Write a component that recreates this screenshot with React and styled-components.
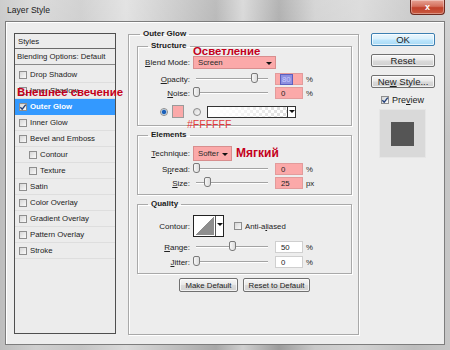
import React from "react";
import styled, { createGlobalStyle } from "styled-components";

const GlobalStyle = createGlobalStyle`
  html, body { margin: 0; padding: 0; }
  body {
    width: 450px;
    height: 350px;
    overflow: hidden;
    font-family: "Liberation Sans", Arial, sans-serif;
    color: #1c1c1c;
  }
  * { box-sizing: border-box; }
`;

const styleItems = [
  { label: "Drop Shadow" },
  { label: "Inner Shadow" },
  { label: "Outer Glow", checked: true, selected: true },
  { label: "Inner Glow" },
  { label: "Bevel and Emboss" },
  { label: "Contour", indent: true },
  { label: "Texture", indent: true },
  { label: "Satin" },
  { label: "Color Overlay" },
  { label: "Gradient Overlay" },
  { label: "Pattern Overlay" },
  { label: "Stroke" },
];

const App = () => (
  <>
    <GlobalStyle />
    <Window>
      <TitleBar>
        <Title>Layer Style</Title>
        <CloseButton>x</CloseButton>
      </TitleBar>
      <Client>
        <StylesPanel>
          <PanelHeader>Styles</PanelHeader>
          <PanelOption>Blending Options: Default</PanelOption>
          <StyleList>
            {styleItems.map((item) => (
              <StyleRow key={item.label} $selected={item.selected} $indent={item.indent}>
                <CheckBox $checked={item.checked} />
                <span>{item.label}</span>
              </StyleRow>
            ))}
          </StyleList>
        </StylesPanel>

        <GroupBox $h={306} $pad="2px 6px 0 8px">
          <Legend $ml={3}>Outer Glow</Legend>

          <GroupBox $h={85} $pad="0">
            <Legend $ml={10}>Structure</Legend>
            <Row $h={13} $mt={5}>
              <Label><u>B</u>lend Mode:</Label>
              <Select $w={83} $h={13}>
                Screen
                <Arrow />
              </Select>
            </Row>
            <SliderRow label={<><u>O</u>pacity:</>} value="80" pos={80} unit="%" hl selected />
            <SliderRow label={<><u>N</u>oise:</>} value="0" pos={0} unit="%" hl mt={2} />
            <Row $h={13} $mt={6} $pl={22}>
              <Radio $on />
              <Swatch />
              <Radio />
              <GradientPicker>
                <GradientArrow>
                  <Arrow />
                </GradientArrow>
              </GradientPicker>
            </Row>
          </GroupBox>

          <GroupBox $h={65} $pad="0" $mt={4}>
            <Legend $ml={10}>Elements</Legend>
            <Row $h={15} $mt={6}>
              <Label><u>T</u>echnique:</Label>
              <Select $w={39} $h={15}>
                Softer
                <Arrow />
              </Select>
            </Row>
            <SliderRow label={<>S<u>p</u>read:</>} value="0" pos={0} unit="%" hl mt={2} />
            <SliderRow label={<><u>S</u>ize:</>} value="25" pos={15} unit="px" hl mt={2} />
          </GroupBox>

          <GroupBox $h={75} $pad="0" $mt={4}>
            <Legend $ml={10}>Quality</Legend>
            <Row $h={22} $mt={6}>
              <Label>Contour:</Label>
              <ContourPicker>
                <ContourPreview />
                <ContourArrow>
                  <Arrow />
                </ContourArrow>
              </ContourPicker>
              <CheckBox $ml={10} />
              <SmallText>Anti-a<u>l</u>iased</SmallText>
            </Row>
            <SliderRow label={<><u>R</u>ange:</>} value="50" pos={50} unit="%" mt={4} />
            <SliderRow label={<><u>J</u>itter:</>} value="0" pos={0} unit="%" mt={3} />
          </GroupBox>

          <ButtonRow>
            <PanelButton $w={59}>Make Default</PanelButton>
            <PanelButton $w={67}>Reset to Default</PanelButton>
          </ButtonRow>
        </GroupBox>

        <SideColumn>
          <DialogButton $default>OK</DialogButton>
          <DialogButton>Reset</DialogButton>
          <DialogButton>
            <span>Ne<u>w</u> Style...</span>
          </DialogButton>
          <PreviewToggle>
            <CheckBox $checked />
            <span>Pre<u>v</u>iew</span>
          </PreviewToggle>
          <PreviewBox>
            <PreviewSquare />
          </PreviewBox>
        </SideColumn>
      </Client>

      <Note $x={17} $y={87} $size={11.4}>Внешнее свечение</Note>
      <Note $x={193} $y={46} $size={11.4}>Осветление</Note>
      <Note $x={236} $y={147} $size={12}>Мягкий</Note>
      <Note $x={187} $y={119} $size={10.5} $light>#FFFFFF</Note>
    </Window>
  </>
);

const SliderRow = ({ label, value, pos, unit, hl, selected, mt = 4 }) => (
  <Row $h={12} $mt={mt}>
    <Label>{label}</Label>
    <Slider>
      <Track>
        <Thumb style={{ left: `calc(${pos}% - 3px)` }} />
      </Track>
    </Slider>
    <NumberBox $hl={hl}>{selected ? <Selection>{value}</Selection> : value}</NumberBox>
    <Unit>{unit}</Unit>
  </Row>
);

const Window = styled.div`
  position: relative;
  width: 450px;
  height: 350px;
  padding: 0 5px 5px;
  display: flex;
  flex-direction: column;
  background:
    linear-gradient(180deg, rgba(255, 255, 255, 0.25), rgba(255, 255, 255, 0) 40%),
    linear-gradient(
      90deg,
      #bdbdbd 0%,
      #cfcfcf 8%,
      #c4c4c4 18%,
      #dadada 28%,
      #bcbcbc 40%,
      #a7a7a7 48%,
      #cfcfcf 54%,
      #9c9c9c 62%,
      #c9c9c9 70%,
      #d2d2d2 80%,
      #bdbdbd 92%,
      #c6c6c6 100%
    );
`;

const TitleBar = styled.div`
  height: 21px;
  display: flex;
  justify-content: space-between;
  align-items: flex-start;
`;

const Title = styled.div`
  padding: 5px 0 0 2px;
  font-size: 8.6px;
  line-height: 10px;
  color: #1b1b1b;
`;

const CloseButton = styled.div`
  width: 35px;
  height: 15px;
  display: flex;
  align-items: center;
  justify-content: center;
  border: 1px solid #6d2a20;
  border-top: none;
  border-radius: 0 0 4px 4px;
  background: linear-gradient(180deg, #e7a394 0%, #d4705d 45%, #c1412b 55%, #c95a40 100%);
  color: #fff;
  font-weight: bold;
  font-size: 9px;
  line-height: 1;
  box-shadow: inset 0 0 0 1px rgba(255, 255, 255, 0.35);
`;

const Client = styled.div`
  flex: 1;
  display: flex;
  align-items: flex-start;
  gap: 12px;
  padding: 7px 8px 0;
  border: 1px solid #7d7d7d;
  background: #ededed;
  box-shadow: inset 1px 1px 0 #fff;
`;

const StylesPanel = styled.div`
  flex: none;
  width: 102px;
  height: 301px;
  margin-top: 4px;
  display: flex;
  flex-direction: column;
  border: 1px solid #4f4f4f;
  background: #ececec;
  font-size: 7.8px;
`;

const PanelHeader = styled.div`
  height: 15px;
  padding-left: 3px;
  display: flex;
  align-items: center;
  border-bottom: 1px solid #6a6a6a;
`;

const PanelOption = styled(PanelHeader)`
  height: 16px;
  padding-left: 2px;
  border-bottom-color: #8a8a8a;
`;

const StyleList = styled.div`
  padding-top: 2px;
  display: flex;
  flex-direction: column;
`;

const StyleRow = styled.div`
  height: 16px;
  display: flex;
  align-items: center;
  gap: 3px;
  padding-left: ${(p) => (p.$indent ? 14 : 4)}px;
  border-bottom: 1px solid ${(p) => (p.$selected ? "#3399ff" : "#dedede")};
  background: ${(p) => (p.$selected ? "#3399ff" : "transparent")};
  color: ${(p) => (p.$selected ? "#fff" : "#222")};
  font-weight: ${(p) => (p.$selected ? "bold" : "normal")};
`;

const CheckMark = () => (
  <svg width="8" height="8" viewBox="0 0 8 8">
    <path d="M1.3 4.2 L3.2 6.2 L6.8 1.6" fill="none" stroke="#23407a" strokeWidth="1.4" />
  </svg>
);

const CheckBoxFrame = styled.span`
  flex: none;
  width: 8px;
  height: 8px;
  margin-left: ${(p) => p.$ml || 0}px;
  display: flex;
  align-items: center;
  justify-content: center;
  border: 1px solid #8e8e8e;
  background: linear-gradient(135deg, #d6d6d6, #fafafa);
  svg { flex: none; }
`;

const CheckBox = ({ $checked, $ml }) => (
  <CheckBoxFrame $ml={$ml}>{$checked && <CheckMark />}</CheckBoxFrame>
);

const GroupBox = styled.fieldset`
  flex: none;
  margin: ${(p) => p.$mt || 0}px 0 0;
  min-width: 0;
  height: ${(p) => p.$h}px;
  padding: ${(p) => p.$pad};
  border: 1px solid #a9a9a9;
  box-shadow: inset 1px 1px 0 #fff, 1px 1px 0 #fff;
  font-size: 8px;
  ${(p) => (p.$h === 306 ? "width: 231px;" : "")}
`;

const Legend = styled.legend`
  margin-left: ${(p) => p.$ml}px;
  padding: 0 3px;
  font-weight: bold;
  font-size: 8px;
  line-height: 10px;
  color: #1a1a1a;
`;

const Row = styled.div`
  height: ${(p) => p.$h}px;
  margin-top: ${(p) => p.$mt}px;
  padding-left: ${(p) => p.$pl || 0}px;
  display: flex;
  align-items: center;
`;

const Label = styled.div`
  flex: none;
  width: 52px;
  margin-right: 3px;
  text-align: right;
  font-size: 8px;
  color: #222;
  white-space: nowrap;
`;

const Select = styled.div`
  position: relative;
  width: ${(p) => p.$w}px;
  height: ${(p) => p.$h}px;
  padding-left: 4px;
  display: flex;
  align-items: center;
  border: 1px solid #d88e8e;
  background: #fba9a9;
  font-size: 7.8px;
  color: #2a2a2a;
  > span {
    position: absolute;
    right: 3px;
    top: 50%;
    margin-top: -1px;
  }
`;

const Arrow = styled.span`
  width: 0;
  height: 0;
  border-left: 3px solid transparent;
  border-right: 3px solid transparent;
  border-top: 3px solid #111;
`;

const Slider = styled.div`
  flex: none;
  width: 78px;
  padding: 0 3px;
  display: flex;
  align-items: center;
`;

const Track = styled.div`
  position: relative;
  width: 72px;
  height: 2px;
  border-top: 1px solid #a3a3a3;
  border-bottom: 1px solid #fff;
`;

const Thumb = styled.div`
  position: absolute;
  top: -6px;
  width: 7px;
  height: 10px;
  border: 1px solid #7a7a7a;
  border-radius: 2px 2px 3px 3px;
  background: linear-gradient(90deg, #f7f7f7, #dcdcdc);
`;

const NumberBox = styled.div`
  flex: none;
  width: 28px;
  height: 12px;
  margin-left: 4px;
  padding-left: 5px;
  display: flex;
  align-items: center;
  border: 1px solid ${(p) => (p.$hl ? "#e29b9b" : "#cfcfcf")};
  background: ${(p) => (p.$hl ? "#fba9a9" : "#fff")};
  font-size: 7.8px;
  color: #222;
`;

const Selection = styled.span`
  padding: 0 1px;
  background: #8d8fe0;
  outline: 1px solid #5c5fc0;
  color: #c9cbff;
`;

const Unit = styled.span`
  margin-left: 3px;
  font-size: 7.8px;
`;

const Radio = styled.span`
  flex: none;
  width: 8px;
  height: 8px;
  margin-right: ${(p) => (p.$on ? 4 : 6)}px;
  border-radius: 50%;
  border: 1px solid #8a8a8a;
  background: ${(p) =>
    p.$on
      ? "radial-gradient(circle, #1b5fb8 0 1.8px, #9cc4ea 2.4px, #f3f3f3 3px)"
      : "linear-gradient(135deg, #d8d8d8, #fafafa)"};
`;

const Swatch = styled.span`
  flex: none;
  width: 12px;
  height: 13px;
  margin-right: 9px;
  border: 1px solid #9a9a9a;
  background: #fba9a9;
`;

const GradientPicker = styled.div`
  flex: none;
  width: 89px;
  height: 12px;
  display: flex;
  justify-content: flex-end;
  border: 1px solid #333;
  background:
    linear-gradient(90deg, #fff 0%, rgba(255, 255, 255, 0.85) 30%, rgba(255, 255, 255, 0) 100%),
    repeating-conic-gradient(#d9d9d9 0 25%, #fff 0 50%) 0 0 / 6px 6px;
`;

const GradientArrow = styled.span`
  width: 8px;
  height: 100%;
  display: flex;
  align-items: center;
  justify-content: center;
  border-left: 1px solid #333;
  background: #fff;
`;

const ContourPicker = styled.div`
  flex: none;
  width: 31px;
  height: 22px;
  display: flex;
  border: 1px solid #222;
  background: #fff;
`;

const ContourPreview = styled.span`
  flex: 1;
  margin: 1px;
  background: linear-gradient(to top left, #8e8e8e 50%, #fff 50%);
`;

const ContourArrow = styled.span`
  width: 8px;
  display: flex;
  align-items: flex-start;
  justify-content: center;
  padding-top: 7px;
  border-left: 1px solid #555;
`;

const SmallText = styled.span`
  margin-left: 3px;
  font-size: 7.8px;
`;

const ButtonRow = styled.div`
  margin-top: 4px;
  display: flex;
  justify-content: center;
  gap: 5px;
`;

const PanelButton = styled.div`
  width: ${(p) => p.$w}px;
  height: 14px;
  display: flex;
  align-items: center;
  justify-content: center;
  border: 1px solid #707070;
  border-radius: 2px;
  background: linear-gradient(180deg, #f6f6f6 0%, #e9e9e9 48%, #dadada 52%, #d2d2d2 100%);
  box-shadow: inset 0 0 0 1px rgba(255, 255, 255, 0.7);
  font-size: 7.8px;
  color: #222;
`;

const SideColumn = styled.div`
  flex: none;
  width: 64px;
  margin-top: 4px;
  display: flex;
  flex-direction: column;
`;

const DialogButton = styled.div`
  height: 13px;
  margin-bottom: 8px;
  display: flex;
  align-items: center;
  justify-content: center;
  border: 1px solid ${(p) => (p.$default ? "#3c7fb1" : "#707070")};
  border-radius: 2px;
  background: ${(p) =>
    p.$default
      ? "linear-gradient(180deg, #eaf6fd 0%, #d9f0fc 48%, #bee6fd 52%, #a7d9f5 100%)"
      : "linear-gradient(180deg, #f6f6f6 0%, #e9e9e9 48%, #dadada 52%, #d0d0d0 100%)"};
  box-shadow: inset 0 0 0 1px rgba(255, 255, 255, 0.7);
  font-size: 9.5px;
  color: #1e1e1e;
  white-space: nowrap;
`;

const PreviewToggle = styled.div`
  height: 10px;
  margin-top: -1px;
  padding-left: 10px;
  display: flex;
  align-items: center;
  gap: 3px;
  font-size: 9px;
`;

const PreviewBox = styled.div`
  width: 47px;
  height: 49px;
  margin: 4px 0 0 8px;
  display: flex;
  align-items: center;
  justify-content: center;
  background: #d9d9d9;
  border: 1px solid #e6e6e6;
`;

const PreviewSquare = styled.div`
  width: 23px;
  height: 24px;
  background: #555;
`;

const Note = styled.div`
  position: absolute;
  left: ${(p) => p.$x}px;
  top: ${(p) => p.$y}px;
  font-family: "Liberation Sans", Arial, sans-serif;
  font-size: ${(p) => p.$size}px;
  line-height: ${(p) => p.$size}px;
  font-weight: ${(p) => (p.$light ? "normal" : "bold")};
  color: ${(p) => (p.$light ? "#e23b3b" : "#c4001c")};
  white-space: nowrap;
`;

export default App;
